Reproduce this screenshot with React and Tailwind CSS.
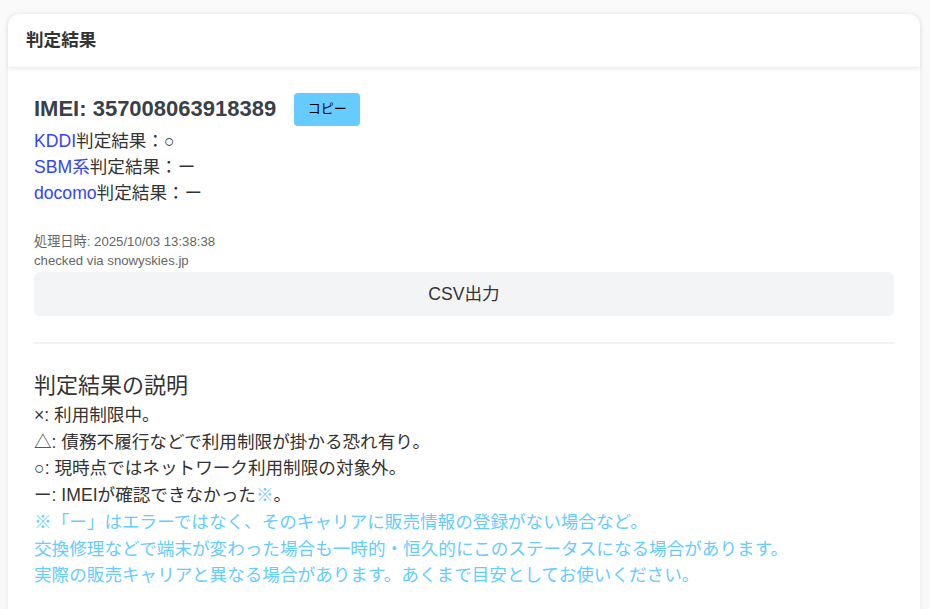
export default function App() {
  return (
    <div
      className="min-h-[609px] bg-[#fafafa] px-2 pt-[14px]"
      style={{ fontFamily: '"Liberation Sans", "Noto Sans CJK JP", sans-serif' }}
    >
      <div className="rounded-t-xl bg-white shadow-[0_0_6px_rgba(0,0,0,0.08)] w-[912px]">
        {/* Header */}
        <div className="h-[53px] flex items-center px-[18px] rounded-t-xl shadow-[0_2px_4px_rgba(0,0,0,0.08)] relative">
          <h2 className="text-[17.6px] font-bold text-[#333]">判定結果</h2>
        </div>

        {/* Body */}
        <div className="px-[26px] pt-[25px] pb-[24px] text-[#333]">
          <div className="flex items-center">
            <span className="text-[22px] font-bold text-[#3a3f4a] leading-[34px]">IMEI: 357008063918389</span>
            <button className="ml-[18px] h-[33px] w-[66px] rounded bg-[#66ccff] text-[13px] text-black">コピー</button>
          </div>
          <div className="text-[17.6px] leading-[26px] mt-[2px]">
            <div><a href="#" className="text-[#3344ff]">KDDI</a>判定結果：○</div>
            <div><a href="#" className="text-[#3344ff]">SBM系</a>判定結果：ー</div>
            <div><a href="#" className="text-[#3344ff]">docomo</a>判定結果：ー</div>
          </div>
          <div className="mt-[26px] text-[13.2px] leading-[19px] text-[#666]">
            <div>処理日時: 2025/10/03 13:38:38</div>
            <div>checked via snowyskies.jp</div>
          </div>
          <button className="mt-[2px] w-full h-[44px] rounded-md bg-[#f3f4f6] text-[17.6px] text-[#333]">CSV出力</button>

          <hr className="mt-[26px] border-0 h-[2px] bg-[#f0f1f3]" />

          <h3 className="mt-[27px] text-[22px] leading-[30px] text-[#333]">判定結果の説明</h3>
          <div className="text-[17.6px] leading-[26.7px] mt-[1px]">
            <div>×: 利用制限中。</div>
            <div>△: 債務不履行などで利用制限が掛かる恐れ有り。</div>
            <div>○: 現時点ではネットワーク利用制限の対象外。</div>
            <div>ー: IMEIが確認できなかった<span className="text-[#66ccff]">※</span>。</div>
            <div className="text-[#66ccff]">
              <div>※「ー」はエラーではなく、そのキャリアに販売情報の登録がない場合など。</div>
              <div>交換修理などで端末が変わった場合も一時的・恒久的にこのステータスになる場合があります。</div>
              <div>実際の販売キャリアと異なる場合があります。あくまで目安としてお使いください。</div>
            </div>
          </div>
        </div>
      </div>
    </div>
  );
}
